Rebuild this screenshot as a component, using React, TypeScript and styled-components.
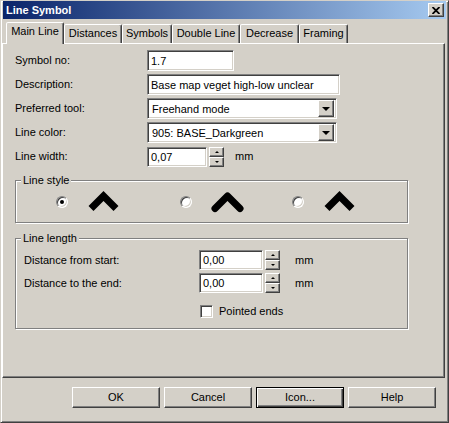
import React from "react";
import styled, { createGlobalStyle, css } from "styled-components";

const face = "#d4d0c8";
const shadow = "#808080";
const dark = "#404040";
const hilite = "#ffffff";

const Global = createGlobalStyle`
  html, body { margin: 0; padding: 0; background: ${face}; }
  body { font-family: "Liberation Sans", Arial, sans-serif; font-size: 11px; color: #000; }
  * { box-sizing: border-box; }
`;

const raised = css`
  background: ${face};
  border: 1px solid;
  border-color: ${hilite} ${dark} ${dark} ${hilite};
  box-shadow: inset -1px -1px ${shadow};
`;

const sunken = css`
  background: #fff;
  border: 1px solid;
  border-color: ${shadow} ${hilite} ${hilite} ${shadow};
  box-shadow: inset 1px 1px ${dark}, inset -1px -1px ${face};
`;

const Window = styled.div`
  width: 449px;
  height: 423px;
  background: ${face};
  border: 1px solid;
  border-color: ${face} ${dark} ${dark} ${face};
  box-shadow: inset 1px 1px ${hilite}, inset -1px -1px ${shadow};
  padding: 0 2px 2px 2px;
  display: flex;
  flex-direction: column;
`;

const TitleBar = styled.div`
  height: 18px;
  background: linear-gradient(to right, #0a246a, #a6caf0);
  display: flex;
  align-items: center;
  justify-content: space-between;
  padding: 0 2px 0 3px;
`;

const Title = styled.span`
  color: #fff;
  font-weight: bold;
  font-size: 11px;
  line-height: 13px;
`;

const CloseButton = styled.div`
  ${raised};
  width: 16px;
  height: 14px;
  display: flex;
  align-items: center;
  justify-content: center;
`;

const TabStrip = styled.div`
  display: flex;
  align-items: flex-end;
  height: 21px;
  margin: 3px 0 0 3px;
  position: relative;
  z-index: 1;
`;

const Tab = styled.div<{ $w: number; $active?: boolean }>`
  width: ${(p) => p.$w}px;
  height: ${(p) => (p.$active ? 22 : 19)}px;
  margin-bottom: ${(p) => (p.$active ? -1 : 0)}px;
  background: ${face};
  border: 1px solid;
  border-bottom: none;
  border-color: ${hilite} ${dark} transparent ${hilite};
  border-radius: 2px 2px 0 0;
  box-shadow: inset -1px 0 ${shadow};
  display: flex;
  justify-content: center;
  padding-top: 2px;
  line-height: 13px;
  white-space: nowrap;
`;

const Panel = styled.div`
  height: 335px;
  margin: 0 1px 0 -1px;
  border: 1px solid;
  border-color: ${hilite} ${dark} ${dark} ${hilite};
  box-shadow: inset -1px -1px ${shadow};
  display: flex;
  flex-direction: column;
  align-items: flex-start;
  padding: 6px 0 0 12px;
`;

const FormGrid = styled.div`
  display: grid;
  grid-template-columns: 132px auto;
  grid-auto-rows: 21px;
  row-gap: 3px;
  align-items: center;
`;

const Label = styled.span`
  line-height: 13px;
  white-space: nowrap;
`;

const TextField = styled.div<{ $w: number; $h?: number }>`
  ${sunken};
  width: ${(p) => p.$w}px;
  height: ${(p) => p.$h ?? 21}px;
  padding: 0 3px;
  display: flex;
  align-items: center;
  white-space: nowrap;
  overflow: hidden;
`;

const Combo = styled.div<{ $w: number }>`
  ${sunken};
  width: ${(p) => p.$w}px;
  height: 21px;
  padding: 2px 2px 2px 4px;
  display: flex;
  align-items: center;
  justify-content: space-between;
  white-space: nowrap;
`;

const DropButton = styled.div`
  ${raised};
  width: 16px;
  height: 17px;
  display: flex;
  align-items: center;
  justify-content: center;
`;

const DownArrow = styled.span<{ $size: number }>`
  width: 0;
  height: 0;
  border-left: ${(p) => p.$size}px solid transparent;
  border-right: ${(p) => p.$size}px solid transparent;
  border-top: ${(p) => p.$size}px solid #000;
`;

const UpArrow = styled.span<{ $size: number }>`
  width: 0;
  height: 0;
  border-left: ${(p) => p.$size}px solid transparent;
  border-right: ${(p) => p.$size}px solid transparent;
  border-bottom: ${(p) => p.$size}px solid #000;
`;

const SpinRow = styled.div<{ $unitGap: number }>`
  display: flex;
  align-items: center;
  gap: 2px;
  & > span:last-child {
    margin-left: ${(p) => p.$unitGap - 2}px;
  }
`;

const SpinButtons = styled.div`
  display: flex;
  flex-direction: column;
  width: 15px;
  height: 20px;
`;

const SpinHalf = styled.div`
  ${raised};
  flex: 1;
  display: flex;
  align-items: center;
  justify-content: center;
`;

const Group = styled.fieldset<{ $mt: number }>`
  margin: ${(p) => p.$mt}px 0 0 0;
  padding: 0;
  width: 393px;
  min-inline-size: 0;
  border: 1px solid ${shadow};
  box-shadow: inset 1px 1px ${hilite}, 1px 1px ${hilite};
`;

const Legend = styled.legend`
  margin-left: 5px;
  padding: 0 2px;
  font-size: 11px;
  line-height: 13px;
  background: ${face};
`;

const StyleRow = styled.div`
  display: grid;
  grid-template-columns: 124px 112px auto;
  padding: 4px 0 10px 40px;
`;

const StyleOption = styled.div`
  display: flex;
  align-items: center;
  gap: 19px;
  height: 21px;
`;

const Radio = styled.span<{ $checked?: boolean }>`
  width: 12px;
  height: 12px;
  border-radius: 50%;
  background: #fff;
  border: 1px solid;
  border-color: ${shadow} ${hilite} ${hilite} ${shadow};
  box-shadow: inset 1px 1px ${dark}, inset -1px -1px ${face};
  display: flex;
  align-items: center;
  justify-content: center;
  &::after {
    content: "";
    width: 4px;
    height: 4px;
    border-radius: 50%;
    background: ${(p) => (p.$checked ? "#000" : "transparent")};
  }
`;

const LengthGrid = styled.div`
  display: grid;
  grid-template-columns: 175px auto;
  grid-template-rows: 20px 20px auto;
  row-gap: 3px;
  align-items: center;
  padding: 5px 0 10px 8px;
`;

const CheckRow = styled.div`
  grid-column: 2;
  margin-top: 9px;
  height: 13px;
  display: flex;
  align-items: center;
  gap: 6px;
  padding-left: 1px;
`;

const CheckBox = styled.span`
  ${sunken};
  width: 13px;
  height: 13px;
`;

const ButtonRow = styled.div`
  display: flex;
  justify-content: flex-end;
  gap: 4px;
  margin-top: 9px;
  padding-right: 10px;
`;

const Button = styled.div<{ $default?: boolean }>`
  width: 88px;
  height: 21px;
  background: ${face};
  display: flex;
  align-items: center;
  justify-content: center;
  line-height: 13px;
  ${(p) =>
    p.$default
      ? css`
          border: 1px solid #000;
          box-shadow: inset 1px 1px ${hilite}, inset -1px -1px ${dark}, inset -2px -2px ${shadow};
        `
      : css`
          border: 1px solid;
          border-color: ${hilite} ${dark} ${dark} ${hilite};
          box-shadow: inset -1px -1px ${shadow};
        `}
`;

type ChevronKind = "flat" | "round" | "sharp";

const Chevron: React.FC<{ kind: ChevronKind }> = ({ kind }) => (
  <svg width="33" height="22" viewBox="0 0 33 22">
    <polyline
      points="4,17.5 16.5,5 29,17.5"
      fill="none"
      stroke="#000"
      strokeWidth="7"
      strokeLinejoin={kind === "round" ? "round" : "miter"}
      strokeLinecap={kind === "round" ? "round" : "butt"}
    />
  </svg>
);

const Spinner: React.FC<{ value: string; w: number; unitGap: number }> = ({ value, w, unitGap }) => (
  <SpinRow $unitGap={unitGap}>
    <TextField $w={w} $h={20}>{value}</TextField>
    <SpinButtons>
      <SpinHalf>
        <UpArrow $size={2} />
      </SpinHalf>
      <SpinHalf>
        <DownArrow $size={2} />
      </SpinHalf>
    </SpinButtons>
    <Label>mm</Label>
  </SpinRow>
);

const tabs = [
  { label: "Main Line", w: 58, active: true },
  { label: "Distances", w: 58 },
  { label: "Symbols", w: 50 },
  { label: "Double Line", w: 68 },
  { label: "Decrease", w: 59 },
  { label: "Framing", w: 49 },
];

const styles: { kind: ChevronKind; checked?: boolean }[] = [
  { kind: "flat", checked: true },
  { kind: "round" },
  { kind: "sharp" },
];

export default function App() {
  return (
    <>
      <Global />
      <Window>
        <TitleBar>
          <Title>Line Symbol</Title>
          <CloseButton>
            <svg width="8" height="7" viewBox="0 0 8 7">
              <path d="M0.5 0 L7.5 7 M7.5 0 L0.5 7" stroke="#000" strokeWidth="1.8" />
            </svg>
          </CloseButton>
        </TitleBar>
        <TabStrip>
          {tabs.map((t) => (
            <Tab key={t.label} $w={t.w} $active={t.active}>
              {t.label}
            </Tab>
          ))}
        </TabStrip>
        <Panel>
          <FormGrid>
            <Label>Symbol no:</Label>
            <TextField $w={87}>1.7</TextField>
            <Label>Description:</Label>
            <TextField $w={193}>Base map veget high-low unclear</TextField>
            <Label>Preferred tool:</Label>
            <Combo $w={190}>
              Freehand mode
              <DropButton>
                <DownArrow $size={4} />
              </DropButton>
            </Combo>
            <Label>Line color:</Label>
            <Combo $w={190}>
              905: BASE_Darkgreen
              <DropButton>
                <DownArrow $size={4} />
              </DropButton>
            </Combo>
            <Label>Line width:</Label>
            <Spinner value="0,07" w={60} unitGap={11} />
          </FormGrid>

          <Group $mt={7}>
            <Legend>Line style</Legend>
            <StyleRow>
              {styles.map((s) => (
                <StyleOption key={s.kind}>
                  <Radio $checked={s.checked} />
                  <Chevron kind={s.kind} />
                </StyleOption>
              ))}
            </StyleRow>
          </Group>

          <Group $mt={9}>
            <Legend>Line length</Legend>
            <LengthGrid>
              <Label>Distance from start:</Label>
              <Spinner value="0,00" w={64} unitGap={15} />
              <Label>Distance to the end:</Label>
              <Spinner value="0,00" w={64} unitGap={15} />
              <CheckRow>
                <CheckBox />
                <Label>Pointed ends</Label>
              </CheckRow>
            </LengthGrid>
          </Group>
        </Panel>
        <ButtonRow>
          <Button>OK</Button>
          <Button>Cancel</Button>
          <Button $default>Icon...</Button>
          <Button>Help</Button>
        </ButtonRow>
      </Window>
    </>
  );
}
